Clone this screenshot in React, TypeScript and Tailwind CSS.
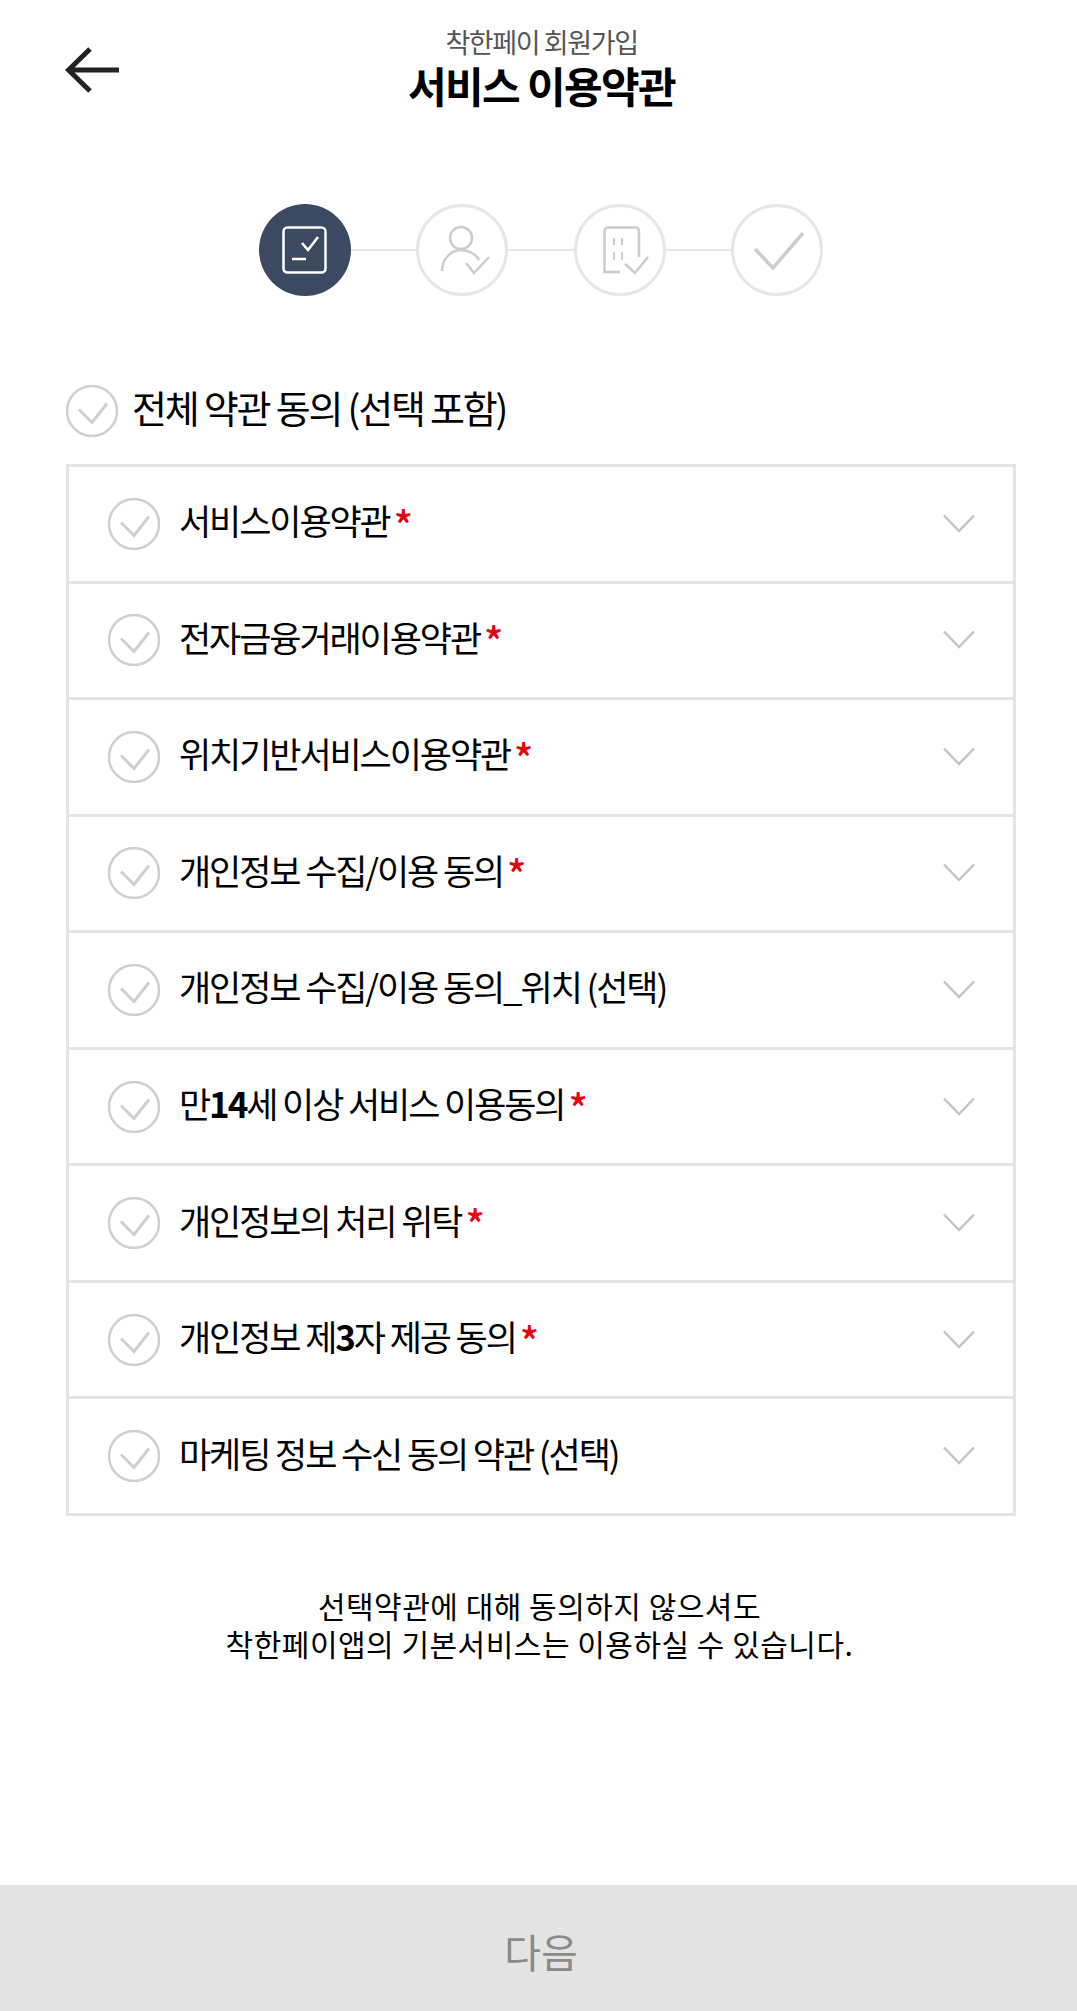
import React from "react";

const font = { fontFamily: '"Noto Sans CJK KR", "Noto Sans", sans-serif' };

function Check({ size = 52 }: { size?: number }) {
  return (
    <svg width={size} height={size} viewBox="0 0 52 52" fill="none" className="shrink-0">
      <circle cx="26" cy="26" r="25" stroke="#cfcfcf" strokeWidth="2.5" />
      <path d="M13 24.5L26 37.5L41 18.5" stroke="#cfcfcf" strokeWidth="3" />
    </svg>
  );
}

function Chevron() {
  return (
    <svg width="32" height="20" viewBox="0 0 32 20" fill="none" className="shrink-0">
      <path d="M1 1.5L16 17L31 1.5" stroke="#c4c4c4" strokeWidth="2.5" />
    </svg>
  );
}

function StepCircle({ active, children }: { active?: boolean; children: React.ReactNode }) {
  return (
    <svg width="92" height="92" viewBox="0 0 92 92" fill="none" className="shrink-0">
      {active ? (
        <circle cx="46" cy="46" r="46" fill="#3b4a60" />
      ) : (
        <circle cx="46" cy="46" r="44.5" stroke="#e6e6e6" strokeWidth="3" />
      )}
      {children}
    </svg>
  );
}

const Line = () => <div className="h-[2px] w-[65.5px] bg-[#e6e6e6]" />;

const Star = () => <span className="ml-[4px] text-[40px] font-medium leading-none text-[#e60012]">*</span>;
const Num = ({ children }: { children: React.ReactNode }) => <span className="font-semibold">{children}</span>;

const rows: { label: React.ReactNode; star?: boolean }[] = [
  { label: "서비스이용약관", star: true },
  { label: "전자금융거래이용약관", star: true },
  { label: "위치기반서비스이용약관", star: true },
  { label: "개인정보 수집/이용 동의", star: true },
  { label: "개인정보 수집/이용 동의_위치 (선택)" },
  { label: <>만<Num>14</Num>세 이상 서비스 이용동의</>, star: true },
  { label: "개인정보의 처리 위탁", star: true },
  { label: <>개인정보 제<Num>3</Num>자 제공 동의</>, star: true },
  { label: "마케팅 정보 수신 동의 약관 (선택)" },
];

export default function App() {
  return (
    <div style={font} className="flex h-[2011px] w-full flex-col overflow-hidden bg-white text-black">
      <header className="relative h-[204px] shrink-0">
        <svg width="56" height="48" viewBox="0 0 56 48" fill="none" className="absolute left-[65px] top-[46px]">
          <path d="M54 24H4M25 3L3.5 24L25 45" stroke="#222" strokeWidth="5" />
        </svg>
        <div className="flex flex-col items-center pl-[6px] pt-[22px]">
          <div className="text-[27px] leading-[40px] tracking-[-1.4px] text-[#555]">착한페이 회원가입</div>
          <div className="text-[42px] font-semibold leading-[46px] tracking-[-1.6px]">서비스 이용약관</div>
        </div>
      </header>

      <div className="flex items-center justify-center pl-[5px]">
        <StepCircle active>
          <rect x="24.5" y="23.5" width="42" height="45" rx="4" stroke="#fff" strokeWidth="2.5" />
          <path d="M43 39L49 46L59 33" stroke="#fff" strokeWidth="2.5" />
          <path d="M33 55H47" stroke="#fff" strokeWidth="2.5" />
        </StepCircle>
        <Line />
        <StepCircle>
          <circle cx="45" cy="34" r="11" stroke="#ccc" strokeWidth="2.5" />
          <path d="M26 67C26 55 35 46 45 46C52 46 60 50 63 56" stroke="#ccc" strokeWidth="2.5" />
          <path d="M50 59L58 69L73 53" stroke="#ccc" strokeWidth="2.5" />
        </StepCircle>
        <Line />
        <StepCircle>
          <path d="M65 53V27C65 25 63.500 23.500 61.500 23.500H34C32 23.500 30.500 25 30.500 27V68H46" stroke="#ccc" strokeWidth="2.5" />
          <path d="M40 34V41M48 34V41M40 48V56M48 48V56" stroke="#ccc" strokeWidth="2" />
          <path d="M51 60L61 69L74 53" stroke="#ccc" strokeWidth="2.5" />
        </StepCircle>
        <Line />
        <StepCircle>
          <path d="M24 45L42 64L72 29" stroke="#ccc" strokeWidth="3.500" />
        </StepCircle>
      </div>

      <div className="mt-[89px] flex items-center gap-[14px] pl-[66px]">
        <Check />
        <div className="pb-[8px] text-[38px] leading-[44px] tracking-[-2.2px]">전체 약관 동의 (선택 포함)</div>
      </div>

      <div className="mx-[61px] ml-[66px] mt-[27px] border-[3px] border-b-0 border-[#e4e4e4]">
        {rows.map((r, i) => (
          <div key={i} className="flex h-[116.56px] items-center border-b-[3px] border-[#e4e4e4] pl-[39px] pr-[38px]">
            <Check />
            <div className="ml-[19px] flex flex-1 items-center text-[35px] leading-[48px] tracking-[-2.1px]">
              <span className="pb-[7px]">{r.label}</span>
              {r.star && <Star />}
            </div>
            <Chevron />
          </div>
        ))}
      </div>

      <div className="mt-[70px] pl-[2px] text-center text-[30px] leading-[38px] tracking-[0.5px]">
        <div>선택약관에 대해 동의하지 않으셔도</div>
        <div>착한페이앱의 기본서비스는 이용하실 수 있습니다.</div>
      </div>

      <div className="mt-auto flex h-[126px] shrink-0 items-center justify-center bg-[#e4e4e4] pl-[5px] pt-[5px] text-[40px] text-[#8a8a8a]">
        다음
      </div>
    </div>
  );
}
